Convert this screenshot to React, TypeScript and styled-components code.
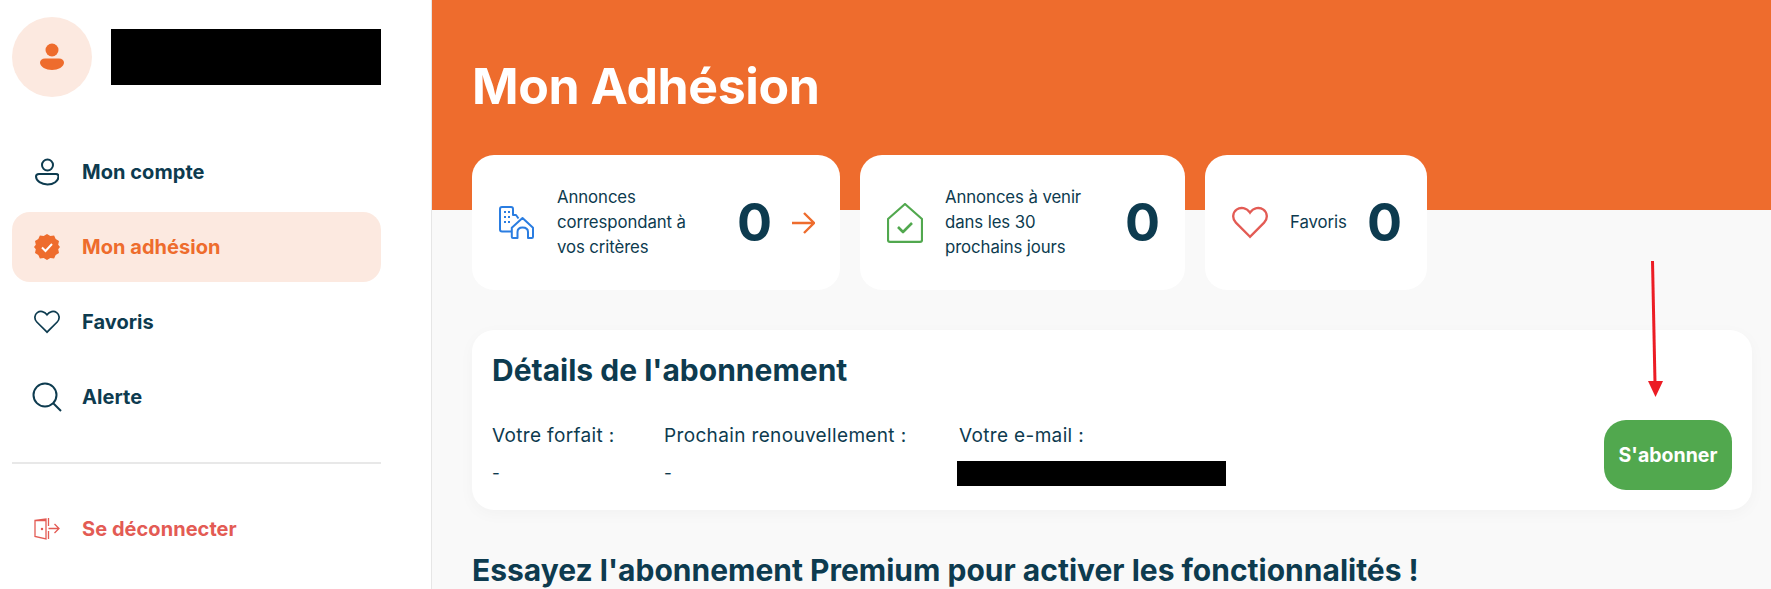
import { createGlobalStyle, styled } from "styled-components";

const GlobalStyle = createGlobalStyle`
  html, body {
    margin: 0;
    padding: 0;
    height: 589px;
    overflow: hidden;
    background: #fff;
    font-family: "Inter", "Noto Sans", sans-serif;
    color: #0d3b4f;
  }
  * { box-sizing: border-box; }
`;

const Layout = styled.div`
  display: grid;
  grid-template-columns: 432px 1fr;
  height: 589px;
  position: relative;
`;

const Sidebar = styled.aside`
  border-right: 1px solid #e6e6e6;
  padding: 17px 50px 0 12px;
  background: #fff;
`;

const Profile = styled.div`
  display: flex;
  align-items: center;
  gap: 19px;
  margin-bottom: 40px;
`;

const Avatar = styled.div`
  width: 80px;
  height: 80px;
  border-radius: 50%;
  background: #fce9e0;
  display: flex;
  align-items: center;
  justify-content: center;
`;

const Redacted = styled.div<{ $w: number; $h: number }>`
  width: ${(p) => p.$w}px;
  height: ${(p) => p.$h}px;
  background: #000;
`;

const EmailBlock = styled(Redacted)`
  margin: 2px 0 0 -2px;
`;

const NavList = styled.nav`
  display: flex;
  flex-direction: column;
  gap: 5px;
`;

const NavItem = styled.a<{ $active?: boolean; $danger?: boolean }>`
  display: flex;
  align-items: center;
  height: 70px;
  padding-left: 20px;
  gap: 20px;
  border-radius: 18px;
  font-size: 20px;
  font-weight: 700;
  letter-spacing: 0.05px;
  background: ${(p) => (p.$active ? "#fce9e0" : "transparent")};
  color: ${(p) => (p.$danger ? "#e35b54" : p.$active ? "#ee6c2d" : "#0d3b4f")};
`;

const NavIcon = styled.span`
  width: 42px;
  margin-left: -6px;
  margin-right: -6px;
  display: flex;
  justify-content: center;
`;

const Divider = styled.hr`
  border: 0;
  height: 2px;
  background: #e8e8e8;
  margin: 30px 0 30px;
`;

const Main = styled.main`
  background: #f9f9f9;
  overflow: hidden;
`;

const Banner = styled.header`
  height: 210px;
  background: #ee6c2d;
  padding: 53px 0 0 40px;
`;

const Title = styled.h1`
  margin: 0;
  font-size: 50px;
  line-height: 66px;
  font-weight: 700;
  letter-spacing: -0.4px;
  color: #fff;
`;

const Cards = styled.div`
  display: flex;
  gap: 20px;
  margin: -55px 0 0 40px;
`;

const StatCard = styled.div<{ $w: number }>`
  width: ${(p) => p.$w}px;
  height: 135px;
  background: #fff;
  border-radius: 22px;
  display: flex;
  align-items: center;
  padding: 0 25px 0 27px;
`;

const StatLabel = styled.div<{ $w: number }>`
  width: ${(p) => p.$w}px;
  margin-left: 22px;
  font-size: 16.8px;
  line-height: 25px;
  font-weight: 400;
  letter-spacing: -0.1px;
`;

const StatValue = styled.div`
  font-size: 52px;
  font-weight: 700;
  line-height: 1;
  margin-left: auto;
`;

const ArrowWrap = styled.span`
  display: flex;
  margin-left: 20px;
`;

const Panel = styled.section`
  margin: 40px 19px 0 40px;
  height: 180px;
  background: #fff;
  border-radius: 22px;
  box-shadow: 0 4px 16px rgba(0, 0, 0, 0.03);
  padding: 21px 20px;
  display: flex;
  justify-content: space-between;
  align-items: flex-end;
`;

const PanelBody = styled.div`
  align-self: stretch;
`;

const PanelTitle = styled.h2`
  margin: 0 0 35px;
  font-size: 30px;
  line-height: 38px;
  font-weight: 700;
`;

const Fields = styled.div`
  display: flex;
`;

const Field = styled.div<{ $w: number }>`
  width: ${(p) => p.$w}px;
`;

const FieldLabel = styled.div`
  font-size: 19px;
  line-height: 24px;
  letter-spacing: 0.35px;
  margin-bottom: 13px;
`;

const FieldValue = styled.div`
  font-size: 17px;
  line-height: 24px;
`;

const SubscribeButton = styled.button`
  width: 128px;
  height: 70px;
  border: 0;
  border-radius: 22px;
  background: #51a84e;
  color: #fff;
  font: 700 19.500px "Inter", sans-serif;
  transform: translateY(1px);
`;

const SectionTitle = styled.h2`
  margin: 41px 0 0 40px;
  font-size: 30px;
  line-height: 38px;
  font-weight: 700;
  white-space: nowrap;
`;

const Annotation = styled.svg`
  position: absolute;
  left: 1640px;
  top: 258px;
`;

const navy = "#0d3b4f";

const UserSolid = () => (
  <svg width="24" height="28" viewBox="0 0 24 28" fill="#ee6c2d">
    <circle cx="12" cy="7" r="6.5" />
    <path d="M5 15.5h14c3 0 5 1.800 5 4 0 4.500-6 7.500-12 7.500S0 24 0 19.500c0-2.200 2-4 5-4z" />
  </svg>
);

const UserOutline = () => (
  <svg width="24" height="28" viewBox="0 0 24 28" fill="none" stroke={navy} strokeWidth="2">
    <circle cx="12.500" cy="7" r="5.500" />
    <path d="M4 16h17c1.500 0 2.500 1 2.500 2.500 0 4.500-5 8-11 8s-11.500-3.500-11.500-8C1 17 2.500 16 4 16z" />
  </svg>
);

const BadgeCheck = () => (
  <svg width="26" height="26" viewBox="0 0 26 26">
    <path
      fill="#ee6c2d"
      d="M13 0l3.300 2 3.800-.4 1.600 3.500 3.300 2-.8 3.700L26 13l-1.800 2.200.8 3.700-3.300 2-1.600 3.500-3.800-.4L13 26l-3.300-2-3.800.4-1.600-3.500-3.300-2 .8-3.700L0 13l1.800-2.200L1 7.100l3.300-2 1.600-3.500 3.800.4z"
    />
    <path d="M8 13.500l3.500 3.500L18 10" fill="none" stroke="#fff" strokeWidth="2" />
  </svg>
);

const Heart = ({ color, size }: { color: string; size: number }) => (
  <svg width={size} height={size * 0.9} viewBox="0 0 26 23" fill="none" stroke={color} strokeWidth="1.700">
    <path d="M13 22L2.800 11.800C-.2 8.800.6 4.300 3.300 2.400 6.200.3 10.500 1 13 4.600 15.500 1 19.800.3 22.700 2.400c2.700 1.900 3.500 6.400.5 9.400z" />
  </svg>
);

const Search = () => (
  <svg width="30" height="30" viewBox="0 0 30 30" fill="none" stroke={navy} strokeWidth="2">
    <circle cx="13" cy="13" r="11.500" />
    <path d="M21 21l8 8" />
  </svg>
);

const Logout = () => (
  <svg width="26" height="22" viewBox="0 0 26 22" fill="none" stroke="#e35b54" strokeWidth="1.300">
    <path d="M12 2.500H1v16l11 2.500V1L1 2.500" />
    <path d="M14.500 0v8M14.500 13v8M14.500 10.500H25M20.500 6l4.500 4.500-4.500 4.500" />
    <circle cx="8" cy="11" r=".6" fill="#e35b54" />
  </svg>
);

const Buildings = () => (
  <svg width="36" height="34" viewBox="0 0 36 34" fill="none" stroke="#2a7de1" strokeWidth="2" strokeLinejoin="round">
    <path d="M12 25.500H3c-1.200 0-2-.8-2-2V3c0-1.200.8-2 2-2h9c1.200 0 2 .8 2 2v6h3l2.500 3.500" />
    <path d="M17 32h-3c-.8 0-1.200-.6-1.200-1.300v-9L23.500 12 34 21.700v9c0 .7-.4 1.300-1.200 1.300H29v-6c0-2.500-2-4.500-5.500-4.500S18.500 23.500 18.500 26v6z" />
    <g fill="#2a7de1" stroke="none">
      <rect x="5" y="5" width="2" height="2" />
      <rect x="9" y="5" width="2" height="2" />
      <rect x="5" y="10" width="2" height="2" />
      <rect x="9" y="10" width="2" height="2" />
      <rect x="5" y="15" width="2" height="2" />
      <rect x="9" y="15" width="2" height="2" />
    </g>
  </svg>
);

const HouseCheck = () => (
  <svg width="36" height="40" viewBox="0 0 36 40" fill="none" stroke="#51a84e" strokeWidth="2.200" strokeLinejoin="round">
    <path d="M18 1L1 16v21c0 1 .8 1.800 1.800 1.800h30.400c1 0 1.800-.8 1.800-1.800V16z" />
    <path d="M11 24l5 5 9-9" strokeWidth="2.600" />
  </svg>
);

const ArrowRight = () => (
  <svg width="23" height="22" viewBox="0 0 23 22" fill="none" stroke="#ee6c2d" strokeWidth="2.400">
    <path d="M0 11h21.500M12 1l10 10-10 10" />
  </svg>
);

export default function App() {
  return (
    <Layout>
      <GlobalStyle />
      <Sidebar>
        <Profile>
          <Avatar>
            <UserSolid />
          </Avatar>
          <Redacted $w={270} $h={56} />
        </Profile>
        <NavList>
          <NavItem>
            <NavIcon><UserOutline /></NavIcon>
            Mon compte
          </NavItem>
          <NavItem $active>
            <NavIcon><BadgeCheck /></NavIcon>
            Mon adhésion
          </NavItem>
          <NavItem>
            <NavIcon><Heart color={navy} size={26} /></NavIcon>
            Favoris
          </NavItem>
          <NavItem>
            <NavIcon><Search /></NavIcon>
            Alerte
          </NavItem>
        </NavList>
        <Divider />
        <NavItem $danger>
          <NavIcon><Logout /></NavIcon>
          Se déconnecter
        </NavItem>
      </Sidebar>
      <Main>
        <Banner>
          <Title>Mon Adhésion</Title>
        </Banner>
        <Cards>
          <StatCard $w={368}>
            <Buildings />
            <StatLabel $w={150}>Annonces correspondant à vos critères</StatLabel>
            <StatValue>0</StatValue>
            <ArrowWrap><ArrowRight /></ArrowWrap>
          </StatCard>
          <StatCard $w={325}>
            <HouseCheck />
            <StatLabel $w={150}>Annonces à venir dans les 30 prochains jours</StatLabel>
            <StatValue>0</StatValue>
          </StatCard>
          <StatCard $w={222}>
            <Heart color="#e35b54" size={36} />
            <StatLabel $w={60}>Favoris</StatLabel>
            <StatValue>0</StatValue>
          </StatCard>
        </Cards>
        <Panel>
          <PanelBody>
            <PanelTitle>Détails de l'abonnement</PanelTitle>
            <Fields>
              <Field $w={172}>
                <FieldLabel>Votre forfait :</FieldLabel>
                <FieldValue>-</FieldValue>
              </Field>
              <Field $w={295}>
                <FieldLabel>Prochain renouvellement :</FieldLabel>
                <FieldValue>-</FieldValue>
              </Field>
              <Field $w={270}>
                <FieldLabel>Votre e-mail :</FieldLabel>
                <EmailBlock $w={269} $h={25} />
              </Field>
            </Fields>
          </PanelBody>
          <SubscribeButton>S'abonner</SubscribeButton>
        </Panel>
        <SectionTitle>Essayez l'abonnement Premium pour activer les fonctionnalités !</SectionTitle>
      </Main>
      <Annotation width="30" height="142" viewBox="0 0 30 142">
        <path d="M12.500 3L15 125" stroke="#ec1c24" strokeWidth="3" fill="none" />
        <path d="M8 123h15l-7.500 16z" fill="#ec1c24" />
      </Annotation>
    </Layout>
  );
}
